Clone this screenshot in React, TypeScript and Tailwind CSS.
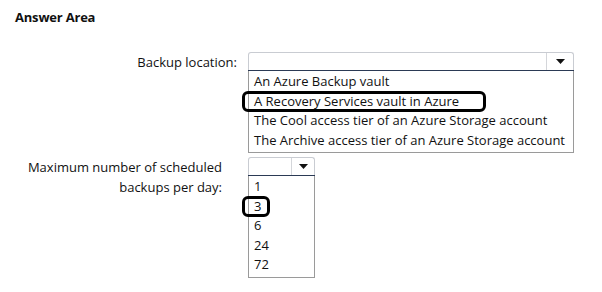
const font = { fontFamily: '"Open Sans", "Noto Sans", sans-serif' };

function Arrow() {
  return (
    <svg width="9" height="5" viewBox="0 0 9 5" className="block">
      <path d="M0 0h9L4.5 5z" fill="#111" />
    </svg>
  );
}

function Dropdown({
  width,
  arrowWidth,
  items,
  picked,
  boxWidth,
}: {
  width: number;
  arrowWidth: number;
  items: string[];
  picked: number;
  boxWidth: number;
}) {
  return (
    <div style={{ width }}>
      <div className="flex h-[18px] rounded-t-[3px] border border-b-0 border-[#c9ccd2] bg-white">
        <div className="flex-1 border-r border-[#d4d6da]" />
        <div className="flex items-center justify-center" style={{ width: arrowWidth }}>
          <Arrow />
        </div>
      </div>
      <div className="h-px bg-[#2b3a55]" />
      <div className="border border-t-0 border-[#9a9a9a] pb-[2px] pt-[1px]">
        {items.map((item, i) => (
          <div key={item} className="relative h-[19.5px] pl-[5px] text-[13px] leading-[19.5px] text-[#111]">
            {item}
            {i === picked && (
              <div
                className="absolute -left-[7px] -top-[1px] h-[21px] rounded-[6px] border-[3px] border-black"
                style={{ width: boxWidth }}
              />
            )}
          </div>
        ))}
      </div>
    </div>
  );
}

export default function App() {
  return (
    <div className="h-[292px] w-[602px] bg-white text-[#111]" style={font}>
      <div className="pl-[15px] pt-[8px] text-[13px] font-bold leading-[18px] tracking-[-0.2px]">Answer Area</div>
      <div className="mt-[26px] flex">
        <div className="w-[237px] pt-[1px] text-right text-[13px] leading-[18px]">Backup location:</div>
        <div className="ml-[11px]">
          <Dropdown
            width={326}
            arrowWidth={26}
            picked={1}
            boxWidth={244}
            items={[
              'An Azure Backup vault',
              'A Recovery Services vault in Azure',
              'The Cool access tier of an Azure Storage account',
              'The Archive access tier of an Azure Storage account',
            ]}
          />
        </div>
      </div>
      <div className="mt-[4px] flex">
        <div className="w-[222px] text-right text-[13px] leading-[20px]">
          Maximum number of scheduled
          <br />
          backups per day:
        </div>
        <div className="ml-[26px]">
          <Dropdown width={67} arrowWidth={22} picked={1} boxWidth={28} items={['1', '3', '6', '24', '72']} />
        </div>
      </div>
    </div>
  );
}
